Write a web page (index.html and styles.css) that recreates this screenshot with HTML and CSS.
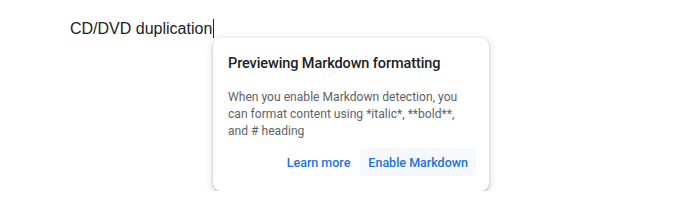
FILE: index.html
```html
<!DOCTYPE html>
<html lang="en">
<head>
  <meta charset="UTF-8" />
  <title>Markdown preview</title>
  <link rel="stylesheet" href="styles.css">
</head>
<body>
  <div class="doc">
    <p class="doc-line">CD/DVD duplication<span class="caret"></span></p>
    <div class="popup">
      <h3 class="popup-title">Previewing Markdown formatting</h3>
      <p class="popup-text">When you enable Markdown detection, you can format content using *italic*, **bold**, and # heading</p>
      <div class="popup-actions">
        <button class="btn">Learn more</button>
        <button class="btn btn-tonal">Enable Markdown</button>
      </div>
    </div>
  </div>
</body>
</html>
```

FILE: styles.css
```css
body { margin: 0; background: #fff; }
.doc { padding: 19px 0 0 70px; }
.doc-line {
  margin: 0;
  font-family: "Liberation Sans", Arial, sans-serif;
  font-size: 16px;
  color: #222;
  line-height: 19px;
  display: flex;
  align-items: center;
}
.caret { display: inline-block; width: 1px; height: 19px; background: #222; margin-left: 1px; }
.popup {
  margin: 0 0 0 143px;
  width: 276px;
  box-sizing: border-box;
  padding: 16px 13px 15px 15px;
  background: #fff;
  border-radius: 8px;
  box-shadow: 0 1px 2px rgba(60,64,67,0.3), 0 2px 6px 2px rgba(60,64,67,0.15);
  font-family: Roboto, "Liberation Sans", sans-serif;
}
.popup-title { margin: 0 0 15px; font-size: 14.5px; font-weight: 500; color: #202124; line-height: 20px; letter-spacing: -0.1px; }
.popup-text { margin: 0; font-size: 12.1px; line-height: 17px; color: #5f6368; }
.popup-actions { display: flex; justify-content: flex-end; align-items: center; gap: 2px; margin-top: 8px; }
.btn {
  border: 0;
  background: none;
  font-family: inherit;
  font-size: 12.5px;
  font-weight: 500;
  color: #1a73e8;
  padding: 0 8px;
  height: 28px;
  border-radius: 4px;
}
.btn-tonal { background: #f6f8fd; }
```
